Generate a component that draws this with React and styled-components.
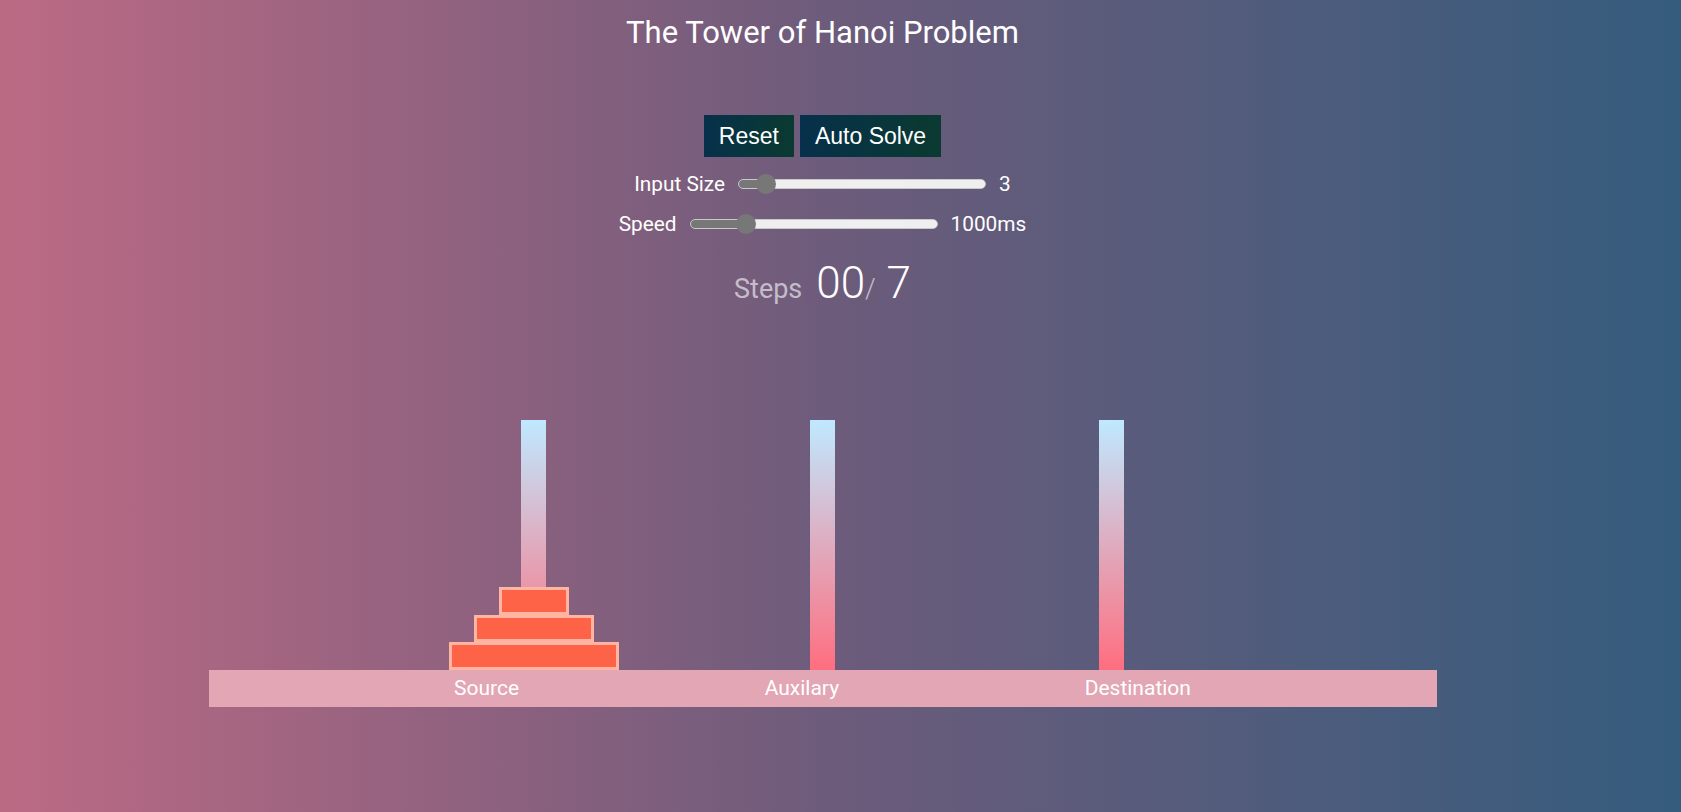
import React, { useEffect, useRef, useState } from "react";
import styled, { createGlobalStyle } from "styled-components";

const GlobalStyle = createGlobalStyle`
  html, body {
    margin: 0;
    padding: 0;
  }
  body {
    min-height: 100vh;
    background: linear-gradient(to right, #bc6a84, #6c5b7b, #355c7d);
    font-family: Roboto, "Noto Sans", Arial, sans-serif;
    color: #fff;
  }
`;

// build the list of moves for n disks
const solve = (n, from, to, via, moves) => {
  if (n === 0) return moves;
  solve(n - 1, from, via, to, moves);
  moves.push([from, to]);
  solve(n - 1, via, to, from, moves);
  return moves;
};

const startTowers = (n) => [
  Array.from({ length: n }, (_, i) => n - i),
  [],
  [],
];

const App = () => {
  const [size, setSize] = useState(3);
  const [speed, setSpeed] = useState(1000);
  const [towers, setTowers] = useState(startTowers(3));
  const [step, setStep] = useState(0);
  const [running, setRunning] = useState(false);
  const moves = useRef(solve(3, 0, 2, 1, []));

  const total = Math.pow(2, size) - 1;

  const reset = (n = size) => {
    setRunning(false);
    setTowers(startTowers(n));
    setStep(0);
    moves.current = solve(n, 0, 2, 1, []);
  };

  useEffect(() => {
    if (!running) return;
    if (step >= moves.current.length) {
      setRunning(false);
      return;
    }
    const t = setTimeout(() => {
      const [from, to] = moves.current[step];
      setTowers((prev) => {
        const next = prev.map((p) => [...p]);
        next[to].push(next[from].pop());
        return next;
      });
      setStep((s) => s + 1);
    }, speed);
    return () => clearTimeout(t);
  }, [running, step, speed]);

  const names = ["Source", "Auxilary", "Destination"];

  return (
    <>
      <GlobalStyle />
      <Page>
        <Title>The Tower of Hanoi Problem</Title>

        <Buttons>
          <Button onClick={() => reset()}>Reset</Button>
          <Button onClick={() => setRunning(true)}>Auto Solve</Button>
        </Buttons>

        <SliderRow>
          <Label>Input Size</Label>
          <Range
            type="range"
            min={1}
            max={28}
            value={size}
            $fill={((size - 1) / 27) * 100}
            onChange={(e) => {
              const n = Number(e.target.value);
              setSize(n);
              reset(n);
            }}
          />
          <Label>{size}</Label>
        </SliderRow>

        <SliderRow $second>
          <Label>Speed</Label>
          <Range
            type="range"
            min={0}
            max={5000}
            step={100}
            value={speed}
            $fill={(speed / 5000) * 100}
            onChange={(e) => setSpeed(Number(e.target.value))}
          />
          <Label>{speed}ms</Label>
        </SliderRow>

        <Steps>
          <StepsLabel>Steps</StepsLabel>
          <StepCount>{String(step).padStart(2, "0")}</StepCount>
          <Slash>/</Slash>
          <StepCount>&nbsp;{total}</StepCount>
        </Steps>

        <Board>
          {towers.map((disks, i) => (
            <Tower key={i}>
              <Peg />
              <Stack>
                {[...disks].reverse().map((d) => (
                  <Disk key={d} $w={20 + d * 50} />
                ))}
              </Stack>
            </Tower>
          ))}
        </Board>

        <Base>
          {names.map((n) => (
            <BaseLabel key={n}>{n}</BaseLabel>
          ))}
        </Base>
      </Page>
    </>
  );
};

const Page = styled.div`
  display: flex;
  flex-direction: column;
  align-items: center;
  padding-right: 36px;
  padding-bottom: 40px;
`;

const Title = styled.h1`
  margin: 14px 0 0;
  font-size: 31px;
  line-height: 38px;
  font-weight: 400;
  color: #fff;
`;

const Buttons = styled.div`
  display: flex;
  gap: 6px;
  margin-top: 63px;
`;

const Button = styled.button`
  padding: 8px 15px;
  border: none;
  border-radius: 0;
  background: linear-gradient(to right, #06304b, #0a3a30);
  color: #fff;
  font-family: "Liberation Sans", Arial, sans-serif;
  font-size: 23px;
  line-height: 26px;
  cursor: pointer;
`;

const SliderRow = styled.div`
  display: flex;
  align-items: center;
  gap: 13px;
  height: 24px;
  margin-top: ${(p) => (p.$second ? "16px" : "15px")};
`;

const Label = styled.span`
  font-size: 20.8px;
  line-height: 24px;
  color: #fff;
`;

const Range = styled.input`
  -webkit-appearance: none;
  appearance: none;
  width: 248px;
  height: 10px;
  margin: 0;
  border-radius: 5px;
  border: 1px solid #c8c8c8;
  box-sizing: border-box;
  background: linear-gradient(
    to right,
    #777 0%,
    #777 ${(p) => p.$fill}%,
    #efefef ${(p) => p.$fill}%,
    #efefef 100%
  );
  outline: none;

  &::-webkit-slider-thumb {
    -webkit-appearance: none;
    width: 20px;
    height: 20px;
    border-radius: 50%;
    background: #777;
    border: none;
    cursor: pointer;
  }
`;

const Steps = styled.div`
  display: flex;
  align-items: baseline;
  margin-top: 25px;
  line-height: 44px;
`;

const StepsLabel = styled.span`
  font-size: 27px;
  color: rgba(255, 255, 255, 0.6);
  margin-right: 14px;
`;

const StepCount = styled.span`
  font-size: 44px;
  font-weight: 300;
  color: #fff;
`;

const Slash = styled.span`
  font-size: 27px;
  font-weight: 300;
  color: rgba(255, 255, 255, 0.6);
`;

const Board = styled.div`
  display: flex;
  width: 866px;
  margin-top: 109px;
`;

const Tower = styled.div`
  position: relative;
  flex: 1;
  height: 250px;
  display: flex;
  justify-content: center;
`;

const Peg = styled.div`
  width: 25px;
  height: 250px;
  background: linear-gradient(to top, #ff6e7f, #bfe9ff);
`;

const Stack = styled.div`
  position: absolute;
  bottom: 0;
  left: 50%;
  transform: translateX(-50%);
  display: flex;
  flex-direction: column;
  align-items: center;
`;

const Disk = styled.div`
  width: ${(p) => p.$w}px;
  height: 27.67px;
  box-sizing: border-box;
  background: #ff6347;
  border: 3px solid #ffb5a1;
`;

const Base = styled.div`
  display: flex;
  justify-content: space-evenly;
  width: 1228px;
  height: 37px;
  background: #e2a6b4;
`;

const BaseLabel = styled.span`
  font-size: 21px;
  line-height: 37px;
  color: #fff;
`;

export default App;
